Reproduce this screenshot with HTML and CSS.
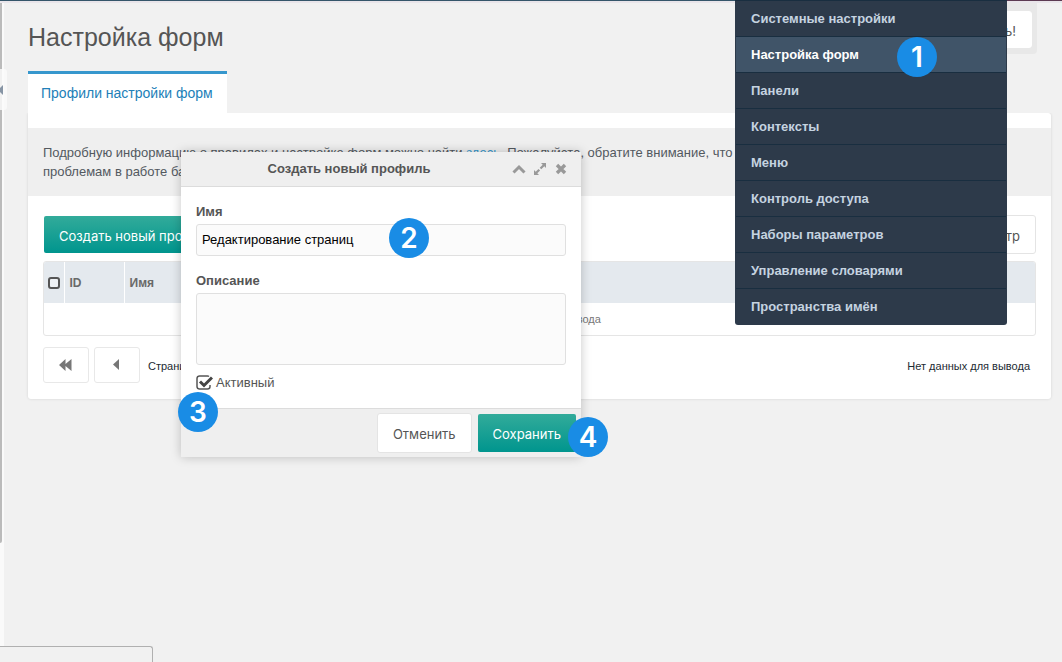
FILE: index.html
```html
<!DOCTYPE html>
<html lang="ru">
<head>
<meta charset="utf-8">
<title>Настройка форм</title>
<link rel="stylesheet" href="styles.css">
</head>
<body>
<div class="topbar"></div>
<div class="app">
  <aside class="rail">
    <div class="rail-thumb"></div>
    <button class="rail-toggle" type="button" aria-label="Свернуть панель"><svg width="3" height="10" viewBox="0 0 3 10"><path d="M3 0v10L-2 5z" fill="#8795a5"/></svg></button>
  </aside>
  <main class="main">
    <header class="page-header">
      <h1 class="page-title">Настройка форм</h1>
      <div class="page-actions"><button class="btn" type="button">Помощь!</button></div>
    </header>
    <nav class="tabs"><a class="tab" href="#profiles">Профили настройки форм</a></nav>
    <section class="panel" id="profiles">
      <p class="info">Подробную информацию о правилах и настройке форм можно найти <a href="#help">здесь</a>. Пожалуйста, обратите внимание, что неверные правила могут привести к<br>проблемам в работе базы.</p>
      <div class="panel-body">
        <div class="toolbar">
          <button class="btn btn-primary" type="button">Создать новый профиль</button>
          <button class="btn" type="button">Очистить фильтр</button>
        </div>
        <div class="grid-frame">
          <table class="grid">
            <thead>
              <tr>
                <th class="col-check"><input class="check" type="checkbox" aria-label="Выбрать все"></th>
                <th class="col-id">ID</th>
                <th>Имя</th>
              </tr>
            </thead>
            <tbody><tr><td class="empty" colspan="3">Нет данных для вывода</td></tr></tbody>
          </table>
        </div>
        <div class="pager">
          <button class="pager-btn" type="button" aria-label="Первая страница"><svg width="14" height="12" viewBox="0 0 14 12"><path d="M6.500 0v5L12.500 0v12l-6-5v5L0 6z" fill="#777"/></svg></button>
          <button class="pager-btn" type="button" aria-label="Предыдущая страница"><svg width="8" height="12" viewBox="0 0 8 12"><path d="M6 0v11L0 5.500z" fill="#777"/></svg></button>
          <span class="pager-label">Страница</span>
          <span class="pager-info">Нет данных для вывода</span>
        </div>
      </div>
    </section>
  </main>
</div>

<nav class="menu">
  <a class="menu-item" href="#system">Системные настройки</a>
  <a class="menu-item is-active" href="#forms">Настройка форм</a>
  <a class="menu-item" href="#dashboards">Панели</a>
  <a class="menu-item" href="#contexts">Контексты</a>
  <a class="menu-item" href="#menu">Меню</a>
  <a class="menu-item" href="#access">Контроль доступа</a>
  <a class="menu-item" href="#sets">Наборы параметров</a>
  <a class="menu-item" href="#lexicon">Управление словарями</a>
  <a class="menu-item" href="#namespaces">Пространства имён</a>
  <span class="step step-1">1</span>
</nav>

<form class="dialog" role="dialog" aria-labelledby="dialog-title">
  <header class="dialog-header">
    <h2 class="dialog-title" id="dialog-title">Создать новый профиль</h2>
    <div class="dialog-tools">
      <button class="tool" type="button" aria-label="Свернуть"><svg width="14" height="14" viewBox="0 0 14 14"><path d="M1.500 10.500L7 5l5.500 5.500" fill="none" stroke="#999" stroke-width="3"/></svg></button>
      <button class="tool" type="button" aria-label="Развернуть"><svg width="14" height="14" viewBox="0 0 14 14"><path d="M8 1h5v5l-1.700-1.700-3 3-1.600-1.600 3-3zM6 13H1V8l1.700 1.700 2.800-2.800 1.600 1.600-2.800 2.800z" fill="#999"/></svg></button>
      <button class="tool" type="button" aria-label="Закрыть"><svg width="14" height="14" viewBox="0 0 14 14"><path d="M3 3l8 8M11 3l-8 8" fill="none" stroke="#999" stroke-width="3.400"/></svg></button>
    </div>
  </header>
  <div class="dialog-body">
    <label class="label" for="name">Имя</label>
    <input class="field" id="name" type="text" value="Редактирование страниц">
    <label class="label" for="description">Описание</label>
    <textarea class="field field-area" id="description"></textarea>
    <div class="check-row">
      <input class="check check-tick" id="active" type="checkbox" checked>
      <label for="active">Активный</label>
    </div>
  </div>
  <footer class="dialog-footer">
    <button class="btn" type="button">Отменить</button>
    <button class="btn btn-primary" type="submit">Сохранить</button>
  </footer>
  <span class="step step-2">2</span>
  <span class="step step-3">3</span>
  <span class="step step-4">4</span>
</form>
<div class="statusbar"></div>
</body>
</html>
```
FILE: styles.css
```css
* { box-sizing: border-box; }
body {
  margin: 0;
  min-height: 100vh;
  display: flex;
  flex-direction: column;
  position: relative;
  overflow: hidden;
  background: #f1f1f1;
  color: #555;
  font: 13px/19px "Liberation Sans", Arial, sans-serif;
}
button, input, textarea { font: inherit; margin: 0; }
a { color: #3697cd; text-decoration: none; }

.topbar {
  height: 3px;
  border-bottom: 2px solid #e9e5ea;
  background: linear-gradient(90deg, #35566a 80%, #5c3a52 80%);
}
.app { flex: 1; display: flex; }

/* Collapsed side panel */
.rail { position: relative; width: 4px; background: #fafafa; }
.rail-thumb { width: 2px; height: 540px; background: #bbb; border-radius: 0 0 2px 0; }
.rail-toggle {
  position: absolute;
  top: 66px;
  left: 0;
  width: 7px;
  height: 41px;
  padding: 0;
  border: 0;
  border-radius: 0 3px 3px 0;
  background: rgba(250, 250, 250, .85);
  display: flex;
  align-items: center;
}

.main { flex: 1; min-width: 0; padding: 0 11px 0 24px; }
.page-header { display: flex; justify-content: space-between; height: 68px; }
.page-title { margin: 0; padding-top: 19px; font-size: 25px; line-height: 30px; font-weight: 400; }
.page-actions {
  align-self: flex-start;
  margin-right: 14px;
  padding: 8px 5px 6px;
  background: #e8e8e8;
  border-radius: 0 0 4px 4px;
}
.page-actions .btn { height: 37px; border-color: #fff; }

.tabs { display: flex; }
.tab {
  height: 42px;
  padding: 0 14px 0 13px;
  border-top: 3px solid #3697cd;
  background: #fff;
  color: #2180b8;
  font-size: 14px;
  line-height: 39px;
}
.panel { background: #fff; border-radius: 0 3px 3px 3px; padding-top: 15px; box-shadow: 0 0 3px rgba(0, 0, 0, .12); clip-path: inset(0 -4px -4px -4px); }
.info { margin: 0; padding: 15px; background: #efefef; color: #53595f; white-space: nowrap; overflow: hidden; }
.panel-body { padding: 19px 15px 16px; }
.toolbar { display: flex; justify-content: space-between; align-items: center; margin-bottom: 7px; }

.btn {
  height: 39px;
  padding: 3px 15px 0;
  border: 1px solid #e4e4e4;
  border-radius: 3px;
  background: #fff;
  color: #555;
  font: 13px/19px Inter, "Liberation Sans", sans-serif;
}
.btn-primary {
  border-color: transparent;
  background: linear-gradient(#32ab9a, #00958e) padding-box;
  color: #fff;
}

.grid-frame { border: 1px solid #e5e5e5; border-radius: 3px; overflow: hidden; }
.grid { width: 100%; border-collapse: collapse; table-layout: fixed; }
.grid th {
  height: 41px;
  padding: 2px 5px 0;
  background: #e4e9ee;
  border-right: 1px solid #fff;
  color: #696969;
  font-size: 12px;
  text-align: left;
}
.grid th:last-child { border-right: 0; }
.grid .col-check { width: 20px; padding: 0 0 0 4px; }
.grid .col-id { width: 60px; }
.empty { height: 32px; padding: 0; text-align: center; font-size: 11px; color: #777; }

.check {
  appearance: none;
  display: block;
  width: 12px;
  height: 12px;
  border: 2px solid #555;
  border-radius: 3px;
  background: #eef1f4;
}
.check-tick {
  width: 17px;
  height: 15px;
  border: 0;
  background: url("data:image/svg+xml,%3Csvg xmlns='http://www.w3.org/2000/svg' viewBox='0 0 17 15'%3E%3Cpath d='M13 1.500Q12.500 1 11.500 1H3.500Q1 1 1 3.500v8Q1 14 3.500 14h8q2.500 0 2.500-2.500V10' fill='none' stroke='%23555' stroke-width='1.500'/%3E%3Cpath d='M4 6.500l4 4L16 2.500' fill='none' stroke='%23444' stroke-width='3'/%3E%3C/svg%3E") no-repeat;
}

.pager { display: flex; align-items: center; gap: 5px; margin-top: 11px; color: #1d2b33; font-size: 11px; }
.pager-btn {
  width: 46px;
  height: 36px;
  padding: 0;
  border: 1px solid #e8e8e8;
  border-radius: 3px;
  background: #fff;
  display: flex;
  align-items: center;
  justify-content: center;
}
.pager-label { padding: 2px 0 0 3px; }
.pager-info { margin-left: auto; padding: 2px 6px 0 0; }

/* Settings drop-down */
.menu {
  position: absolute;
  top: 0;
  right: 55px;
  width: 272px;
  padding: 0 1px;
  border-radius: 0 0 3px 3px;
  background: #2d3a4a;
  border-top: 1px solid #192e40;
}
.menu-item {
  display: block;
  height: 36px;
  padding: 0 15px;
  border-bottom: 1px solid #192e40;
  color: #c5d3e0;
  font-weight: 700;
  line-height: 36px;
}
.menu-item:nth-of-type(9) { border-bottom: 0; }
.menu-item.is-active { background: #405468; color: #fff; }

/* Profile dialog */
.dialog {
  position: absolute;
  top: 152px;
  left: 181px;
  width: 400px;
  background: #fff;
  box-shadow: 0 0 10px rgba(0, 0, 0, .22);
}
.dialog-header {
  position: relative;
  height: 35px;
  border-bottom: 1px solid #dcdcdc;
  background: #efefef;
}
.dialog-title { margin: 0; padding: 0 64px 0 0; font-size: 13px; line-height: 34px; text-align: center; }
.dialog-tools { position: absolute; top: 10px; right: 13px; display: flex; gap: 7px; }
.tool { width: 14px; height: 14px; padding: 0; border: 0; background: none; display: flex; }
.dialog-body { padding: 15px 15px 16px; display: flex; flex-direction: column; }
.label { margin-bottom: 3px; font-weight: 700; }
.field {
  height: 32px;
  margin-bottom: 15px;
  padding: 0 5px 2px;
  border: 1px solid #e0e0e0;
  border-radius: 3px;
  background: #fbfbfb;
  color: #000;
}
.field-area { height: 72px; margin-bottom: 8px; resize: none; }
.check-row { display: flex; align-items: center; gap: 3px; }
.dialog-footer {
  display: flex;
  justify-content: flex-end;
  gap: 5px;
  height: 49px;
  padding: 4px;
  border-top: 1px solid #dcdcdc;
  background: #efefef;
}
.dialog-footer .btn { height: 40px; padding: 3px 15px 0; }

/* Numbered step markers */
.step {
  position: absolute;
  width: 40px;
  height: 40px;
  border-radius: 50%;
  background: #198ce5;
  color: #fff;
  font: 600 28px/40px Inter, sans-serif;
  text-align: center;
}
.step-1 { top: 36px; right: 70px; }
.step-2 { top: 66px; left: 208px; }
.step-3 { top: 240px; left: -3px; }
.step-4 { top: 265px; right: -27px; }

.statusbar {
  position: absolute;
  bottom: 0;
  left: 0;
  width: 153px;
  height: 16px;
  border: solid #b0b0b0;
  border-width: 1px 1px 0 0;
  border-radius: 0 3px 0 0;
  background: #f1f1f1;
}
```
